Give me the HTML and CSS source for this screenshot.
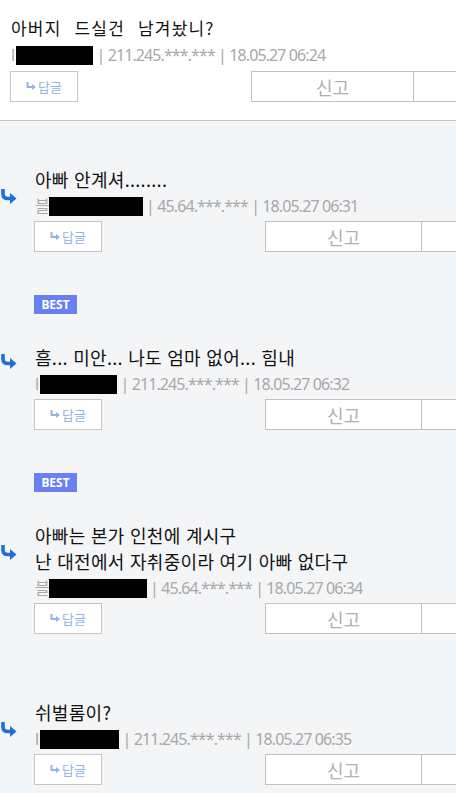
FILE: index.html
```html
<!DOCTYPE html>
<html lang="ko">
<head>
<meta charset="UTF-8" />
<title>댓글</title>
<link rel="stylesheet" href="styles.css">
</head>
<body>
<div class="post">
  <p class="post-text">아버지 드실건 남겨놨니?</p>
  <div class="meta">l<span class="redact nick-a"></span> | 211.245.***.*** | 18.05.27 06:24</div>
  <div class="actions">
    <button class="reply-btn"><svg class="mini-arrow" width="10" height="8" viewBox="0 0 10 8"><path d="M1.5 0 V5 H7" fill="none" stroke="#93b3e8" stroke-width="2"/><polygon points="6,2 10,5 6,8" fill="#93b3e8"/></svg>답글</button>
    <div class="tools"><button class="tool">신고</button><button class="tool"></button></div>
  </div>
</div>

<div class="replies">
  <div class="reply">
    <div class="reply-icon"><svg width="17" height="15" viewBox="0 0 17 15"><path d="M3 1 V5 Q3 9.5 8 9.5 H11" fill="none" stroke="#1f6fde" stroke-width="3.6" stroke-linecap="round"/><polygon points="10,4 16.5,9.5 10,15" fill="#1f6fde"/></svg></div>
    <div class="reply-body">
      <p class="reply-text">아빠 안계셔........</p>
      <div class="meta">블<span class="redact nick-b"></span> | 45.64.***.*** | 18.05.27 06:31</div>
      <div class="actions">
        <button class="reply-btn"><svg class="mini-arrow" width="10" height="8" viewBox="0 0 10 8"><path d="M1.5 0 V5 H7" fill="none" stroke="#93b3e8" stroke-width="2"/><polygon points="6,2 10,5 6,8" fill="#93b3e8"/></svg>답글</button>
        <div class="tools"><button class="tool">신고</button><button class="tool"></button></div>
      </div>
    </div>
  </div>

  <div class="reply">
    <div class="reply-icon"><svg width="17" height="15" viewBox="0 0 17 15"><path d="M3 1 V5 Q3 9.5 8 9.5 H11" fill="none" stroke="#1f6fde" stroke-width="3.6" stroke-linecap="round"/><polygon points="10,4 16.5,9.5 10,15" fill="#1f6fde"/></svg></div>
    <div class="reply-body has-best">
      <span class="best">BEST</span>
      <p class="reply-text">흠... 미안... 나도 엄마 없어... 힘내</p>
      <div class="meta">l<span class="redact nick-a"></span> | 211.245.***.*** | 18.05.27 06:32</div>
      <div class="actions">
        <button class="reply-btn"><svg class="mini-arrow" width="10" height="8" viewBox="0 0 10 8"><path d="M1.5 0 V5 H7" fill="none" stroke="#93b3e8" stroke-width="2"/><polygon points="6,2 10,5 6,8" fill="#93b3e8"/></svg>답글</button>
        <div class="tools"><button class="tool">신고</button><button class="tool"></button></div>
      </div>
    </div>
  </div>

  <div class="reply">
    <div class="reply-icon"><svg width="17" height="15" viewBox="0 0 17 15"><path d="M3 1 V5 Q3 9.5 8 9.5 H11" fill="none" stroke="#1f6fde" stroke-width="3.6" stroke-linecap="round"/><polygon points="10,4 16.5,9.5 10,15" fill="#1f6fde"/></svg></div>
    <div class="reply-body has-best">
      <span class="best">BEST</span>
      <p class="reply-text">아빠는 본가 인천에 계시구<br>난 대전에서 자취중이라 여기 아빠 없다구</p>
      <div class="meta">블<span class="redact nick-c"></span> | 45.64.***.*** | 18.05.27 06:34</div>
      <div class="actions">
        <button class="reply-btn"><svg class="mini-arrow" width="10" height="8" viewBox="0 0 10 8"><path d="M1.5 0 V5 H7" fill="none" stroke="#93b3e8" stroke-width="2"/><polygon points="6,2 10,5 6,8" fill="#93b3e8"/></svg>답글</button>
        <div class="tools"><button class="tool">신고</button><button class="tool"></button></div>
      </div>
    </div>
  </div>

  <div class="reply">
    <div class="reply-icon"><svg width="17" height="15" viewBox="0 0 17 15"><path d="M3 1 V5 Q3 9.5 8 9.5 H11" fill="none" stroke="#1f6fde" stroke-width="3.6" stroke-linecap="round"/><polygon points="10,4 16.5,9.5 10,15" fill="#1f6fde"/></svg></div>
    <div class="reply-body">
      <p class="reply-text">쉬벌롬이?</p>
      <div class="meta">l<span class="redact nick-d"></span> | 211.245.***.*** | 18.05.27 06:35</div>
      <div class="actions">
        <button class="reply-btn"><svg class="mini-arrow" width="10" height="8" viewBox="0 0 10 8"><path d="M1.5 0 V5 H7" fill="none" stroke="#93b3e8" stroke-width="2"/><polygon points="6,2 10,5 6,8" fill="#93b3e8"/></svg>답글</button>
        <div class="tools"><button class="tool">신고</button><button class="tool"></button></div>
      </div>
    </div>
  </div>
</div>
</body>
</html>
```

FILE: styles.css
```css
html, body {
  margin: 0;
  overflow-x: hidden;
}
body {
  font-family: "Noto Sans", "Noto Sans CJK KR", sans-serif;
  background-color: #f4f5f7;
  color: #111;
}
.post {
  background-color: #fff;
  padding: 16px 0 18px 10px;
  border-bottom: 1px solid #c4c4c4;
}
.post-text {
  margin: 0;
  padding-left: 1px;
  font-family: "Noto Sans CJK KR", sans-serif;
  font-size: 17px;
  line-height: 24px;
  letter-spacing: 1.2px;
  word-spacing: 7px;
}
.post .meta {
  margin-top: 5px;
  padding-left: 1px;
}
.post .actions {
  margin-top: 6px;
  width: 566px;
}
.post .tool {
  width: 163px;
}
.meta {
  height: 20px;
  line-height: 20px;
  font-size: 16px;
  letter-spacing: -0.9px;
  color: #a8a8a8;
  white-space: nowrap;
}
.redact {
  display: inline-block;
  height: 19px;
  background-color: #000;
  vertical-align: -4px;
}
.nick-a { width: 77px; margin-left: 2px; }
.nick-b { width: 94px; }
.nick-c { width: 98px; }
.nick-d { width: 79px; margin-left: 2px; }
.actions {
  display: flex;
}
.reply-btn {
  width: 68px;
  height: 31px;
  padding: 0;
  border: 1px solid #c6c6c6;
  background-color: #fff;
  color: #93b3e8;
  font-family: "Noto Sans CJK KR", sans-serif;
  font-size: 13px;
  display: flex;
  align-items: center;
  justify-content: center;
  gap: 2px;
}
.mini-arrow {
  margin-top: -1px;
}
.tools {
  margin-left: auto;
  display: flex;
}
.tool {
  width: 157px;
  height: 31px;
  padding: 0;
  border: 1px solid #c2c2c2;
  background-color: #fff;
  color: #b0b0b0;
  font-family: "Noto Sans CJK KR", sans-serif;
  font-size: 18px;
}
.tool + .tool {
  margin-left: -1px;
}
.reply {
  display: flex;
  align-items: center;
}
.reply-icon {
  width: 34px;
  flex-shrink: 0;
  display: flex;
}
.reply-body {
  padding: 45px 0 20px;
}
.reply-body.has-best {
  padding-top: 23px;
}
.best {
  display: block;
  width: 43px;
  height: 19px;
  margin-bottom: 30px;
  background-color: #6b7ff4;
  color: #fff;
  font-family: "Noto Sans", sans-serif;
  font-size: 12px;
  font-weight: bold;
  line-height: 19px;
  text-align: center;
}
.reply-text {
  margin: 0;
  padding-left: 1px;
  font-family: "Noto Sans CJK KR", sans-serif;
  font-size: 18px;
  line-height: 26px;
  letter-spacing: 0.3px;
}
.reply .meta {
  margin-top: 4px;
  padding-left: 1px;
}
.reply .actions {
  margin-top: 5px;
  width: 544px;
}
```
